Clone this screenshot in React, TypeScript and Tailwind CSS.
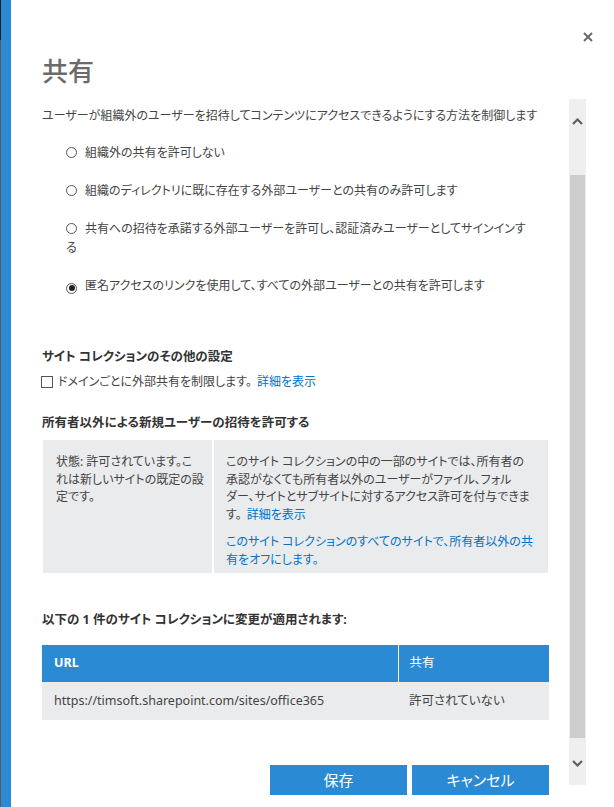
import { ReactNode } from "react";

const radioOptions = [
  { label: "組織外の共有を許可しない", checked: false },
  { label: "組織のディレクトリに既に存在する外部ユーザーとの共有のみ許可します", checked: false },
  {
    label: "共有への招待を承諾する外部ユーザーを許可し、認証済みユーザーとしてサインインする",
    checked: false,
  },
  { label: "匿名アクセスのリンクを使用して、すべての外部ユーザーとの共有を許可します", checked: true },
];

function Radio({ checked }: { checked: boolean }) {
  return (
    <span className="mr-[8px] inline-flex h-[11px] w-[11px] translate-y-[1px] items-center justify-center rounded-full border border-[#555]">
      {checked ? <span className="h-[6px] w-[6px] rounded-full bg-[#222]" /> : null}
    </span>
  );
}

function Heading({ children, className }: { children: ReactNode; className?: string }) {
  return <h2 className={`text-[12.5px] leading-[19px] font-bold text-[#333] ${className ?? ""}`}>{children}</h2>;
}

function Chevron({ up }: { up?: boolean }) {
  return (
    <svg width="11" height="7" viewBox="0 0 11 7" className={up ? "" : "rotate-180"}>
      <path d="M1 6 L5.5 1.5 L10 6" fill="none" stroke="#606060" strokeWidth="2.2" />
    </svg>
  );
}

export default function App() {
  return (
    <div className="flex h-[807px] w-[614px] overflow-hidden bg-white font-['Noto_Sans','Noto_Sans_CJK_JP',sans-serif] [font-feature-settings:'palt'] text-[#444]">
      <div className="flex w-px flex-col">
        <div className="h-[40px] bg-[#1f1f1f]" />
        <div className="flex-1 bg-[#5b5b5b]" />
      </div>
      <div className="w-[10px] bg-[#2a8ad4]" />

      <div className="relative flex flex-1 flex-col">
        <button className="absolute top-[32px] right-[21px] p-0" type="button" aria-label="閉じる">
          <svg width="10" height="10" viewBox="0 0 10 10" className="block">
            <path d="M1 1 L9 9 M9 1 L1 9" stroke="#666" strokeWidth="1.8" />
          </svg>
        </button>

        <div className="h-[99px] pt-[56px] pl-[31px]">
          <h1 className="text-[26px] leading-[30px] font-medium text-[#6b6b6b]">共有</h1>
        </div>

        <div className="flex h-[696px] pr-[28px] pl-[31px]">
          <div className="w-[507px] pt-[7px]">
            <p className="text-[12px] leading-[19px]">
              ユーザーが組織外のユーザーを招待してコンテンツにアクセスできるようにする方法を制御します
            </p>

            <div className="mt-[18px] space-y-[19px] pr-[20px] pl-[24px]">
              {radioOptions.map((option) => (
                <p key={option.label} className="text-[12px] leading-[19px]">
                  <Radio checked={option.checked} />
                  {option.label}
                </p>
              ))}
            </div>

            <Heading className="mt-[52px]">サイト コレクションのその他の設定</Heading>
            <div className="mt-[6px] flex items-center text-[12px] leading-[19px]">
              <span className="mr-[5px] -ml-px h-[12px] w-[12px] border border-[#555] bg-white" />
              <span>ドメインごとに外部共有を制限します。</span>
              <a className="ml-[5px] text-[#0072c6]" href="#">
                詳細を表示
              </a>
            </div>

            <Heading className="mt-[22px]">所有者以外による新規ユーザーの招待を許可する</Heading>
            <div className="mt-[8px] ml-px flex w-[505px] gap-[2px] text-[12px] leading-[17.5px]">
              <div className="w-[169px] bg-[#eaebed] pt-[13px] pr-[4px] pb-[5px] pl-[13px]">
                状態: 許可されています。こ
                <br />
                れは新しいサイトの既定の設
                <br />
                定です。
              </div>
              <div className="flex-1 bg-[#eaebed] pt-[13px] pr-[4px] pb-[5px] pl-[12px]">
                <p>
                  このサイト コレクションの中の一部のサイトでは、所有者の
                  <br />
                  承認がなくても所有者以外のユーザーがファイル、フォル
                  <br />
                  ダー、サイトとサブサイトに対するアクセス許可を付与できま
                  <br />
                  す。
                  <a className="ml-[5px] text-[#0072c6]" href="#">
                    詳細を表示
                  </a>
                </p>
                <p className="mt-[10px]">
                  <a className="text-[#0072c6]" href="#">
                    このサイト コレクションのすべてのサイトで、所有者以外の共
                    <br />
                    有をオフにします。
                  </a>
                </p>
              </div>
            </div>

            <Heading className="mt-[37px]">以下の 1 件のサイト コレクションに変更が適用されます:</Heading>
            <table className="mt-[16px] w-full border-collapse text-[12.5px]">
              <thead>
                <tr className="h-[37px] bg-[#2a8ad4] text-left text-white">
                  <th className="w-[356px] border-r border-white pl-[12px] font-bold">URL</th>
                  <th className="pl-[11px] font-normal">共有</th>
                </tr>
              </thead>
              <tbody>
                <tr className="h-[38px] bg-[#eaebed]">
                  <td className="pl-[12px]">https://timsoft.sharepoint.com/sites/office365</td>
                  <td className="pl-[11px]">許可されていない</td>
                </tr>
              </tbody>
            </table>

            <div className="mt-[45px] flex justify-end gap-[5px]">
              <button className="h-[30px] w-[137px] bg-[#2a8ad4] text-[15px] text-white" type="button">
                保存
              </button>
              <button className="h-[30px] w-[137px] bg-[#2a8ad4] text-[15px] text-white" type="button">
                キャンセル
              </button>
            </div>
          </div>

          <div className="ml-[20px] flex h-[686px] w-[17px] flex-col bg-[#efefef]">
            <div className="flex h-[44px] items-center justify-center">
              <Chevron up />
            </div>
            <div className="flex-1 px-px pt-[32px] pb-[3px]">
              <div className="h-full bg-[#cdcdcd]" />
            </div>
            <div className="flex h-[44px] items-center justify-center">
              <Chevron />
            </div>
          </div>
        </div>
      </div>
    </div>
  );
}
